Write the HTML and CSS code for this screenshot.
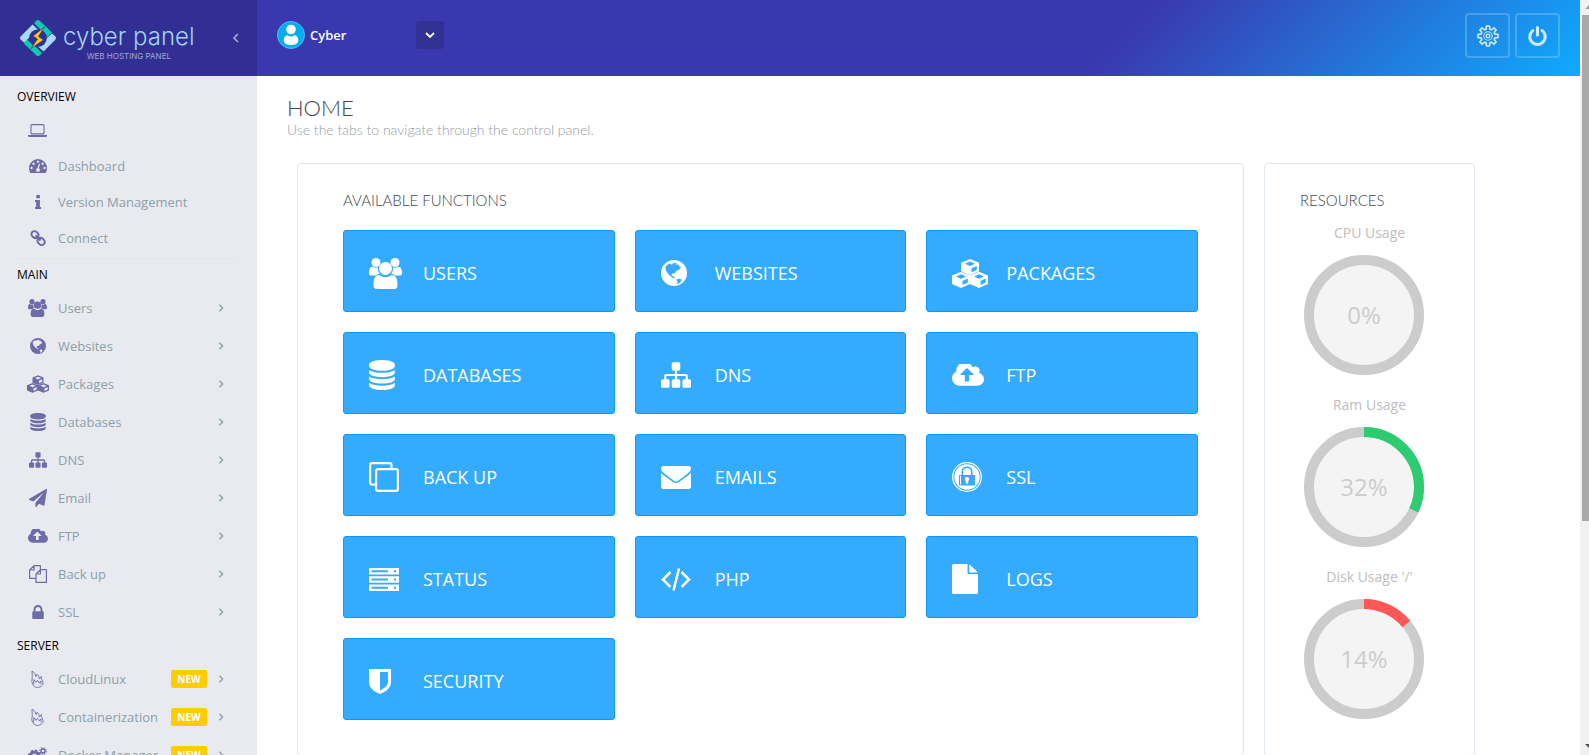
FILE: index.html
```
<!DOCTYPE html>
<html lang="en">
<head>
<meta charset="utf-8">
<title>Home - CyberPanel</title>
<link rel="stylesheet" href="styles.css">
</head>
<body>
<svg class="sprite" aria-hidden="true">
  <symbol id="users" viewBox="0 0 33 31"><circle cx="16.500" cy="10.500" r="6.500"/><circle cx="7" cy="4.500" r="4.500"/><circle cx="26" cy="4.500" r="4.500"/><path d="M4 8.800C1 8 0 12 0 15.500 0 17 1 17.600 2.500 17.600H7Q8.500 16 10.800 15.800 8.400 12.500 9 9.200 6.500 10.600 4 8.800z"/><path d="M29 8.800C32 8 33 12 33 15.500 33 17 32 17.600 30.500 17.600H26Q24.500 16 22.200 15.800 24.600 12.500 24 9.200 26.500 10.600 29 8.800z"/><path d="M10.500 17Q16.500 21.500 22.500 17C27 17 28.500 21 28.500 27Q28.500 31 25 31H8Q4.500 31 4.500 27C4.500 21 6 17 10.500 17z"/></symbol>
  <symbol id="globe" viewBox="0 0 24 24"><path fill-rule="evenodd" d="M12 0a12 12 0 1 1 0 24a12 12 0 1 1 0-24zM5.500 4.500L8 3.200 10 4.300 12 2.600 14.500 3 13.500 4.500 16 4 17 6 18.600 6.800 16.500 9 14.500 9.600 12.500 12.500 11 12 9.500 13.500 11 15 13 16 11.500 16.800 8 14.200 5 10.500 4 7zM14 18L17 17.300 19.300 18.300 17.500 21 14.800 22.400 15.300 20z"/></symbol>
  <symbol id="cubes" viewBox="0 0 36 29"><path id="cube" fill-rule="evenodd" d="M18 0L27 3.800V12.300L18 16.300 9 12.300V3.800zM18 2.600L13 4.800 18 7 23 4.800zM19.500 9.300V13.300L24.800 10.900V6.900z"/><use href="#cube" x="-9" y="12.700"/><use href="#cube" x="9" y="12.700"/></symbol>
  <symbol id="database" viewBox="128 0 1536 1792"><path d="M896 768q237 0 443-43t325-127v170q0 69-103 128t-280 93.500-385 34.500-385-34.500-280-93.500-103-128v-170q119 84 325 127t443 43zm0 768q237 0 443-43t325-127v170q0 69-103 128t-280 93.500-385 34.500-385-34.500-280-93.500-103-128v-170q119 84 325 127t443 43zm0-384q237 0 443-43t325-127v170q0 69-103 128t-280 93.500-385 34.500-385-34.500-280-93.500-103-128v-170q119 84 325 127t443 43zm0-1152q208 0 385 34.500t280 93.500 103 128v128q0 69-103 128t-280 93.500-385 34.500-385-34.500-280-93.500-103-128v-128q0-69 103-128t280-93.500 385-34.500z"/></symbol>
  <symbol id="sitemap" viewBox="0 128 1792 1536"><path d="M1792 1248v320q0 40-28 68t-68 28h-320q-40 0-68-28t-28-68v-320q0-40 28-68t68-28h96v-192h-512v192h96q40 0 68 28t28 68v320q0 40-28 68t-68 28h-320q-40 0-68-28t-28-68v-320q0-40 28-68t68-28h96v-192h-512v192h96q40 0 68 28t28 68v320q0 40-28 68t-68 28h-320q-40 0-68-28t-28-68v-320q0-40 28-68t68-28h96v-192q0-52 38-90t90-38h512v-192h-96q-40 0-68-28t-28-68v-320q0-40 28-68t68-28h320q40 0 68 28t28 68v320q0 40-28 68t-68 28h-96v192h512q52 0 90 38t38 90v192h96q40 0 68 28t28 68z"/></symbol>
  <symbol id="cloud" viewBox="-64 256 1920 1280"><path fill-rule="evenodd" d="M1216 864q0-14-9-23l-352-352q-9-9-23-9t-23 9l-351 351q-10 12-10 24 0 14 9 23t23 9h224v352q0 13 9.500 22.500t22.500 9.500h192q13 0 22.500-9.500t9.500-22.500v-352h224q13 0 22.500-9.500t9.500-22.500zm640 288q0 159-112.500 271.500t-271.500 112.500h-1088q-185 0-316.500-131.500t-131.500-316.500q0-130 70-240t188-165q-2-30-2-43 0-212 150-362t362-150q156 0 285.500 87t188.500 231q71-62 166-62 106 0 181 75t75 181q0 76-41 138 130 31 213.500 135.500t83.500 238.500z"/></symbol>
  <symbol id="clone" viewBox="0 0 30 30"><path fill="none" stroke="currentColor" stroke-width="2.200" d="M22.500 6V3.200Q22.500 1.100 20.500 1.100H3.200Q1.100 1.100 1.100 3.200V20.500Q1.100 22.500 3.200 22.500H6M9.200 7.100H26.800Q28.900 7.100 28.900 9.200V26.800Q28.900 28.900 26.800 28.900H9.200Q7.100 28.900 7.100 26.800V9.200Q7.100 7.100 9.200 7.100z"/></symbol>
  <symbol id="envelope" viewBox="0 0 30 23"><path d="M2.500 0H27.500Q30 0 30 2.500 30 5 27 7.300L17.500 14.500Q15 16.500 12.500 14.500L3 7.300Q0 5 0 2.500 0 0 2.500 0zM0 6.800Q1 8 2 8.700L12 16Q15 18 18 16L28 8.700Q29 8 30 6.800V20.500Q30 23 27.500 23H2.500Q0 23 0 20.500z"/></symbol>
  <symbol id="ssl" viewBox="0 0 30 30"><circle cx="15" cy="15" r="14.300" fill="none" stroke="currentColor" stroke-width="1.300"/><path fill-rule="evenodd" d="M15 2.300a12.700 12.700 0 1 1 0 25.400a12.700 12.700 0 1 1 0-25.400zM7 13V23.500H23V13H20.500V10Q20.500 4.500 15 4.500T9.500 10V13zM11 13V10Q11 6 15 6T19 10V13zM8 14H9V22.500H8zM15 14.800A2.300 2.300 0 0 1 16.200 19V21.500H13.800V19A2.300 2.300 0 0 1 15 14.800z"/></symbol>
  <symbol id="status" viewBox="0 0 30 23"><path fill-rule="evenodd" d="M0 0H30V6.500H0zM2.500 2.300V4.200H19V2.300zM25 2.300V4.200H27V2.300zM0 8.250H30V14.750H0zM2.500 10.550V12.450H19V10.550zM25 10.550V12.450H27V10.550zM0 16.500H30V23H0zM2.500 18.800V20.700H19V18.800zM25 18.800V20.700H27V18.800z"/></symbol>
  <symbol id="code" viewBox="0 0 30 23"><path fill="none" stroke="currentColor" stroke-width="2.500" d="M9.500 4L2 11.500 9.500 19M20.500 4L28 11.500 20.500 19M18 .5L12.500 22.500"/></symbol>
  <symbol id="file" viewBox="0 0 26 30"><path d="M1.500 0H15.500V8.500Q15.500 10 17 10H26V28.500Q26 30 24.500 30H1.500Q0 30 0 28.500V1.500Q0 0 1.500 0zM17.200 .4Q18 .8 18.600 1.400L24.500 7Q25.200 7.700 25.400 8.400H17.200z"/></symbol>
  <symbol id="shield" viewBox="0 0 22 25"><path fill-rule="evenodd" d="M0 0H22V13C22 19 17 22.500 11 25 5 22.500 0 19 0 13zM11 3V21.500C15.500 19 19 16.500 19 13V3z"/></symbol>
  <symbol id="laptop" viewBox="0 0 19 13"><rect x="3" y=".6" width="13" height="9.300" rx="1" fill="none" stroke="currentColor" stroke-width="1.100"/><path d="M0 11H19V12Q19 13 17.500 13H1.500Q0 13 0 12z"/></symbol>
  <symbol id="dashboard" viewBox="0 0 18 14"><path fill-rule="evenodd" d="M9 0A9 9 0 0 1 18 9Q18 12 16.600 14H1.400Q0 12 0 9A9 9 0 0 1 9 0zM2.500 7.800a1.200 1.200 0 1 0 .1 0zM4.500 3.500a1.200 1.200 0 1 0 .1 0zM9 1.400a1.200 1.200 0 1 0 .1 0zM13.500 3.500a1.200 1.200 0 1 0 .1 0zM15.500 7.800a1.200 1.200 0 1 0 .1 0zM9.900 4.600L8.600 9Q7 9.500 7 11A2 2 0 0 0 11 11Q11 10 9.900 9.300L11 5z"/></symbol>
  <symbol id="info" viewBox="0 0 6 14"><path d="M1.300 0H4.900V3.200H1.300zM0 5H4.900V12H6V14H0V12H1.100V7H0z"/></symbol>
  <symbol id="link" viewBox="0 0 16 16"><g fill="none" stroke="currentColor" stroke-width="1.900"><rect x="1.200" y="1.600" width="7.500" height="6" rx="3" transform="rotate(45 4.900 4.600)"/><rect x="7.400" y="8.400" width="7.500" height="6" rx="3" transform="rotate(45 11.100 11.400)"/><path d="M5.500 5.500L10.500 10.500"/></g></symbol>
  <symbol id="plane" viewBox="0 0 1792 1792"><path d="M1764 11q33 24 27 64l-256 1536q-5 29-32 45-14 8-31 8-11 0-24-5l-453-185-242 295q-18 23-49 23-13 0-22-4-19-7-30.500-23.500t-11.500-36.500v-349l864-1059-1069 925-395-162q-37-14-40-55-2-40 32-59l1664-960q15-9 32-9 20 0 36 11z"/></symbol>
  <symbol id="copy" viewBox="0 0 18 18"><path fill="none" stroke="currentColor" stroke-width="1.200" stroke-linejoin="round" d="M7 13.400H.6V5L5 .6H11.400V4.500M5 .6V5H.6M7 9L11.400 4.600H17.400V17.400H7zM11.400 4.600V9H7"/></symbol>
  <symbol id="lock" viewBox="320 128 1152 1408"><path d="M640 768h512v-192q0-106-75-181t-181-75-181 75-75 181v192zm832 96v576q0 40-28 68t-68 28h-960q-40 0-68-28t-28-68v-576q0-40 28-68t68-28h32v-192q0-184 132-316t316-132 316 132 132 316v192h32q40 0 68 28t28 68z"/></symbol>
  <symbol id="fire" viewBox="0 0 13 18"><path fill="none" stroke="currentColor" stroke-width=".9" stroke-linejoin="round" d="M4 16.800Q.6 14.800 .8 11.500 1.600 9 1 1 4.600 3 5 6.500L6.200 4.200Q8.600 6.500 8.300 9L10.300 6.500Q10 8.500 11 10 12.600 12.500 11.800 14.500 10.200 17.500 6.500 17.500 5 17.500 4 16.800zM2.800 14.500Q2.300 12 3 9.500L4.800 12.300 6.500 10.300 8 12.800 10 11 9.900 14.300"/></symbol>
  <symbol id="gear" viewBox="-12 -12 24 24"><g fill="none" stroke="currentColor" stroke-linejoin="round"><path stroke-width="1.800" d="M7.500-2L10.900-1.700V1.700L7.500 2 6.750 3.900 8.900 6.500 6.500 8.900 3.900 6.750 2 7.500 1.700 10.900H-1.700L-2 7.500-3.900 6.750-6.500 8.900-8.900 6.500-6.750 3.900-7.500 2-10.900 1.700V-1.700L-7.500-2-6.750-3.900-8.900-6.500-6.500-8.900-3.900-6.750-2-7.500-1.700-10.900H1.700L2-7.500 3.900-6.750 6.500-8.900 8.900-6.500 6.750-3.900z"/><circle r="4.600" stroke-width="1.200"/><circle r="2" stroke-width="1.400"/></g></symbol>
  <symbol id="cogs" viewBox="0 0 19 17"><g fill="none" stroke="currentColor"><circle cx="6.500" cy="9" r="4" stroke-width="3"/><circle cx="6.500" cy="9" r="5.800" stroke-width="1.500" stroke-dasharray="2.300 2.250"/><circle cx="15" cy="4" r="2" stroke-width="1.400"/><circle cx="15" cy="4" r="3.200" stroke-width="1.200" stroke-dasharray="1.250 1.260"/></g></symbol>
  <symbol id="power" viewBox="128 0 1536 1664"><path d="M1664 896q0 156-61 298t-164 245-245 164-298 61-298-61-245-164-164-245-61-298q0-182 80.500-343t226.500-270q43-32 95.500-25t83.500 50q32 42 24.500 94.500t-49.500 84.500q-98 74-151.500 181t-53.500 228q0 104 40.500 198.500t109.500 163.500 163.500 109.500 198.500 40.500 198.500-40.500 163.500-109.500 109.500-163.500 40.500-198.500q0-121-53.500-228t-151.500-181q-42-32-49.500-84.500t24.500-94.500q31-43 84-50t95 25q146 109 226.500 270t80.500 343zm-640-768v640q0 52-38 90t-90 38-90-38-38-90v-640q0-52 38-90t90-38 90 38 38 90z"/></symbol>
  <symbol id="chevron" viewBox="0 0 6 10"><path fill="none" stroke="currentColor" stroke-width="1.700" d="M1 1L5 5 1 9"/></symbol>
</svg>

<div class="app">
  <header class="topbar">
    <div class="brand">
      <a class="logo" href="#">
        <svg width="36" height="36" viewBox="0 0 36 36"><path fill="#0bcbb1" d="M14 3L16.500 .5Q18 -.5 19.500 .5L32 12.500 27 17.500 20 9zM5 18L16 27 22 33 19.500 35.500Q18 36.500 16.500 35.500L4 23.500z"/><path fill="#a9d9f7" d="M.5 16.500L12.500 4.500 18 9.500 9 18 4 22.500 .5 19.500Q-.5 18 .5 16.500zM32 13.500L35.500 16.500Q36.500 18 35.500 19.500L23.500 31.500 18 26.500 27 18z"/><circle cx="18" cy="18" r="8.800" fill="#313193"/><path fill="#ffc709" stroke="#313193" stroke-width=".7" d="M24.500 7L13 16 17.500 19 11 28.500 23.500 20 18.500 16.500z"/></svg>
        <span class="logo-text"><span class="logo-name">cyber panel</span><span class="logo-tag">WEB HOSTING PANEL</span></span>
      </a>
      <button class="collapse" aria-label="Collapse sidebar"><svg class="flip" width="6" height="10"><use href="#chevron"/></svg></button>
    </div>
    <div class="account">
      <svg width="28" height="28" viewBox="0 0 28 28"><circle cx="14" cy="14" r="13.500" fill="#00aeef" stroke="#5bb9ee"/><circle cx="14" cy="8.500" r="4.800" fill="#fff"/><path fill="#fff" d="M10 14Q14 17 18 14 21.500 15.500 21.300 20 20.500 24 14 24T6.700 20Q6.500 15.500 10 14z"/></svg>
      <span class="account-name">Cyber</span>
      <button class="drop" aria-label="Account menu"><svg width="10" height="7" viewBox="0 0 10 7"><path d="M1 1L5 5 9 1" fill="none" stroke="#fff" stroke-width="1.800"/></svg></button>
    </div>
    <div class="actions">
      <button class="action" aria-label="Settings"><svg width="22" height="22"><use href="#gear"/></svg></button>
      <button class="action" aria-label="Log out"><svg width="19" height="20"><use href="#power"/></svg></button>
    </div>
  </header>

  <nav class="sidebar">
    <h2 class="group">Overview</h2>
    <ul class="menu compact">
      <li><a class="item" href="#" aria-label="Server"><span class="ico"><svg width="19" height="13"><use href="#laptop"/></svg></span></a></li>
      <li><a class="item" href="#"><span class="ico"><svg width="18" height="14"><use href="#dashboard"/></svg></span>Dashboard</a></li>
      <li><a class="item" href="#"><span class="ico"><svg width="6" height="14"><use href="#info"/></svg></span>Version Management</a></li>
      <li><a class="item" href="#"><span class="ico"><svg width="16" height="16"><use href="#link"/></svg></span>Connect</a></li>
    </ul>
    <hr class="rule">
    <h2 class="group">Main</h2>
    <ul class="menu">
      <li><a class="item" href="#"><span class="ico"><svg width="19" height="18"><use href="#users"/></svg></span>Users<svg class="more" width="6" height="8"><use href="#chevron"/></svg></a></li>
      <li><a class="item" href="#"><span class="ico"><svg width="16" height="16"><use href="#globe"/></svg></span>Websites<svg class="more" width="6" height="8"><use href="#chevron"/></svg></a></li>
      <li><a class="item" href="#"><span class="ico"><svg width="22" height="18"><use href="#cubes"/></svg></span>Packages<svg class="more" width="6" height="8"><use href="#chevron"/></svg></a></li>
      <li><a class="item" href="#"><span class="ico"><svg width="16" height="18"><use href="#database"/></svg></span>Databases<svg class="more" width="6" height="8"><use href="#chevron"/></svg></a></li>
      <li><a class="item" href="#"><span class="ico"><svg width="18" height="16"><use href="#sitemap"/></svg></span>DNS<svg class="more" width="6" height="8"><use href="#chevron"/></svg></a></li>
      <li><a class="item" href="#"><span class="ico"><svg width="18" height="18"><use href="#plane"/></svg></span>Email<svg class="more" width="6" height="8"><use href="#chevron"/></svg></a></li>
      <li><a class="item" href="#"><span class="ico"><svg width="20" height="14"><use href="#cloud"/></svg></span>FTP<svg class="more" width="6" height="8"><use href="#chevron"/></svg></a></li>
      <li><a class="item" href="#"><span class="ico"><svg width="18" height="18"><use href="#copy"/></svg></span>Back up<svg class="more" width="6" height="8"><use href="#chevron"/></svg></a></li>
      <li><a class="item" href="#"><span class="ico"><svg width="12" height="14"><use href="#lock"/></svg></span>SSL<svg class="more" width="6" height="8"><use href="#chevron"/></svg></a></li>
    </ul>
    <h2 class="group">Server</h2>
    <ul class="menu">
      <li><a class="item" href="#"><span class="ico"><svg width="13" height="18"><use href="#fire"/></svg></span>CloudLinux<span class="badge">NEW</span><svg class="more" width="6" height="8"><use href="#chevron"/></svg></a></li>
      <li><a class="item" href="#"><span class="ico"><svg width="13" height="18"><use href="#fire"/></svg></span>Containerization<span class="badge">NEW</span><svg class="more" width="6" height="8"><use href="#chevron"/></svg></a></li>
      <li><a class="item" href="#"><span class="ico"><svg width="19" height="17"><use href="#cogs"/></svg></span>Docker Manager<span class="badge">NEW</span><svg class="more" width="6" height="8"><use href="#chevron"/></svg></a></li>
    </ul>
  </nav>

  <main class="content">
    <h1 class="title">HOME</h1>
    <p class="subtitle">Use the tabs to navigate through the control panel.</p>
    <div class="panels">
      <section class="panel functions">
        <h2 class="panel-title">AVAILABLE FUNCTIONS</h2>
        <div class="tiles">
          <a class="tile" href="#"><span class="tile-icon"><svg width="33" height="31"><use href="#users"/></svg></span>USERS</a>
          <a class="tile" href="#"><span class="tile-icon"><svg width="26" height="26"><use href="#globe"/></svg></span>WEBSITES</a>
          <a class="tile" href="#"><span class="tile-icon"><svg width="36" height="29"><use href="#cubes"/></svg></span>PACKAGES</a>
          <a class="tile" href="#"><span class="tile-icon"><svg width="26" height="30"><use href="#database"/></svg></span>DATABASES</a>
          <a class="tile" href="#"><span class="tile-icon"><svg width="30" height="26"><use href="#sitemap"/></svg></span>DNS</a>
          <a class="tile" href="#"><span class="tile-icon"><svg width="32" height="22"><use href="#cloud"/></svg></span>FTP</a>
          <a class="tile" href="#"><span class="tile-icon"><svg width="30" height="30"><use href="#clone"/></svg></span>BACK UP</a>
          <a class="tile" href="#"><span class="tile-icon"><svg width="30" height="23"><use href="#envelope"/></svg></span>EMAILS</a>
          <a class="tile" href="#"><span class="tile-icon"><svg width="30" height="30"><use href="#ssl"/></svg></span>SSL</a>
          <a class="tile" href="#"><span class="tile-icon"><svg width="30" height="23"><use href="#status"/></svg></span>STATUS</a>
          <a class="tile" href="#"><span class="tile-icon"><svg width="30" height="23"><use href="#code"/></svg></span>PHP</a>
          <a class="tile" href="#"><span class="tile-icon"><svg width="26" height="30"><use href="#file"/></svg></span>LOGS</a>
          <a class="tile" href="#"><span class="tile-icon"><svg width="22" height="25"><use href="#shield"/></svg></span>SECURITY</a>
        </div>
      </section>
      <section class="panel resources">
        <h2 class="panel-title">RESOURCES</h2>
        <h3 class="meter-label">CPU Usage</h3>
        <div class="meter"><svg width="120" height="120" viewBox="0 0 120 120"><circle class="track" cx="60" cy="60" r="55"/></svg><span class="value">0%</span></div>
        <h3 class="meter-label">Ram Usage</h3>
        <div class="meter"><svg width="120" height="120" viewBox="0 0 120 120"><circle class="track" cx="60" cy="60" r="55"/><circle class="bar green" cx="60" cy="60" r="55" pathLength="100" stroke-dasharray="32 68" transform="rotate(-90 60 60)"/></svg><span class="value">32%</span></div>
        <h3 class="meter-label">Disk Usage '/'</h3>
        <div class="meter"><svg width="120" height="120" viewBox="0 0 120 120"><circle class="track" cx="60" cy="60" r="55"/><circle class="bar red" cx="60" cy="60" r="55" pathLength="100" stroke-dasharray="14 86" transform="rotate(-90 60 60)"/></svg><span class="value">14%</span></div>
      </section>
    </div>
  </main>

  <div class="scrollbar" aria-hidden="true">
    <span class="arrow up"></span>
    <span class="thumb"></span>
    <span class="arrow down"></span>
  </div>
</div>
</body>
</html>
```
FILE: styles.css
```
* { box-sizing: border-box; }

body {
  margin: 0;
  background: #fff;
  color: #3e4855;
  font-family: "Open Sans", "Noto Sans", sans-serif;
  font-size: 13px;
}

h1, h2, h3, p, ul { margin: 0; padding: 0; font-weight: 400; }
ul { list-style: none; }
a { color: inherit; text-decoration: none; }
button { padding: 0; border: 0; background: none; color: inherit; font: inherit; cursor: pointer; }
svg { display: block; fill: currentColor; }
.sprite { display: none; }

.app {
  display: grid;
  grid-template-columns: 257px minmax(0, 1fr) 9px;
  grid-template-rows: 76px minmax(0, 1fr);
  height: 100vh;
  overflow: hidden;
}

/* Top bar */
.topbar {
  grid-column: 1 / 3;
  display: flex;
  background: linear-gradient(135deg, #3a38ae 70%, #0fabff 100%);
}
.brand {
  display: flex;
  align-items: center;
  justify-content: space-between;
  width: 257px;
  padding: 0 18px 0 20px;
  background: rgba(0, 0, 0, .15);
}
.logo { display: flex; align-items: center; gap: 7px; }
.logo-text { display: flex; flex-direction: column; align-items: center; padding-top: 6px; }
.logo-name { color: #a3d3f5; font: 300 24px/30px Inter, sans-serif; }
.logo-tag { color: #a5a6cf; font: 400 8px/8px Inter, sans-serif; }
.collapse { color: #a5a6cf; }
.flip { transform: scaleX(-1); }
.account {
  display: flex;
  align-items: center;
  gap: 5px;
  width: 187px;
  height: 70px;
  padding-left: 20px;
}
.account-name { color: #fff; font-weight: 600; }
.drop {
  display: grid;
  place-items: center;
  width: 28px;
  height: 28px;
  margin-left: auto;
  border-radius: 4px;
  background: #313194;
}
.actions { display: flex; gap: 5px; margin-left: auto; padding: 13px 20px 0 0; }
.action {
  display: grid;
  place-items: center;
  width: 45px;
  height: 45px;
  border: 2px solid rgba(255, 255, 255, .2);
  border-radius: 4px;
  color: rgba(255, 255, 255, .8);
}

/* Sidebar */
.sidebar { padding: 10px 20px 0 17px; overflow: hidden; background: #e9eaef; }
.group {
  color: #000;
  font-size: 12px;
  font-weight: 500;
  line-height: 22px;
  text-transform: uppercase;
}
.menu { margin-bottom: 4px; padding-top: 3px; }
.item {
  display: flex;
  align-items: center;
  height: 38px;
  padding-right: 13px;
  color: #8ba0aa;
}
.compact { margin-bottom: 2px; padding-top: 4px; }
.compact .item { height: 36px; }
.ico {
  display: grid;
  flex: none;
  place-items: center;
  width: 41px;
  color: #6d6ba8;
}
.more { flex: none; margin-left: auto; color: #8ba0aa; }
.badge {
  width: 36px;
  margin-left: auto;
  border-radius: 2px;
  background: #fc0;
  color: #fff;
  font-size: 10px;
  font-weight: 700;
  line-height: 18px;
  text-align: center;
}
.badge + .more { margin-left: 11px; }
.rule { height: 1px; margin: 0 0 5px; border: 0; background: #dde7f0; }

/* Content */
.content { padding: 20px 30px 0; overflow: hidden; }
.title, .subtitle, .panel-title { font-family: Lato, sans-serif; font-weight: 300; }
.title { font-size: 22px; line-height: 24px; }
.subtitle { color: #989ba3; font-size: 14px; line-height: 20px; }
.panels {
  display: grid;
  grid-template-columns: minmax(0, 947fr) minmax(0, 211fr);
  gap: 20px;
  margin: 23px 75px 0 10px;
}
.panel { border: 1px solid #dfe8f1; border-radius: 4px; }
.panel-title { font-size: 15px; line-height: 20px; }
.functions { padding: 26px 45px 35px; }
.tiles {
  display: grid;
  grid-template-columns: repeat(3, minmax(0, 1fr));
  gap: 20px;
  padding-top: 20px;
}
.tile {
  display: flex;
  align-items: center;
  height: 82px;
  padding: 4px 24px 0 25px;
  border: 1px solid #0c99ff;
  border-radius: 3px;
  background: #34abff;
  color: #fff;
  font-size: 18px;
}
.tile-icon { flex: none; width: 54px; }

.resources { padding: 26px 0 0; }
.resources .panel-title { padding-left: 35px; }
.meter-label {
  padding: 12px 0;
  color: #bebebe;
  font-size: 14px;
  line-height: 20px;
  text-align: center;
}
.panel-title + .meter-label { padding-top: 13px; }
.meter { display: grid; place-items: center; width: 120px; margin: 0 0 8px 39px; }
.meter svg, .value { grid-area: 1 / 1; }
.value { padding-bottom: 2px; color: #ccc; font-size: 24px; }
.track { fill: #f4f4f4; stroke: #ccc; stroke-width: 10; }
.bar { fill: none; stroke-width: 10; }
.green { stroke: #2ecc71; }
.red { stroke: #ff5757; }

/* Scrollbar strip at the window edge */
.scrollbar {
  grid-column: 3;
  grid-row: 1 / 3;
  display: flex;
  flex-direction: column;
  padding-left: 2px;
  overflow: hidden;
  background: #f1f1f1;
}
.arrow { flex: none; width: 8px; height: 4px; margin: 5px 0 6px 3px; }
.up { background: #a3a3a3; clip-path: polygon(50% 0, 100% 100%, 0 100%); }
.down { margin: auto 0 7px 3px; background: #505050; clip-path: polygon(0 0, 100% 0, 50% 100%); }
.thumb { height: 67%; background: #a8a8a8; }
```
